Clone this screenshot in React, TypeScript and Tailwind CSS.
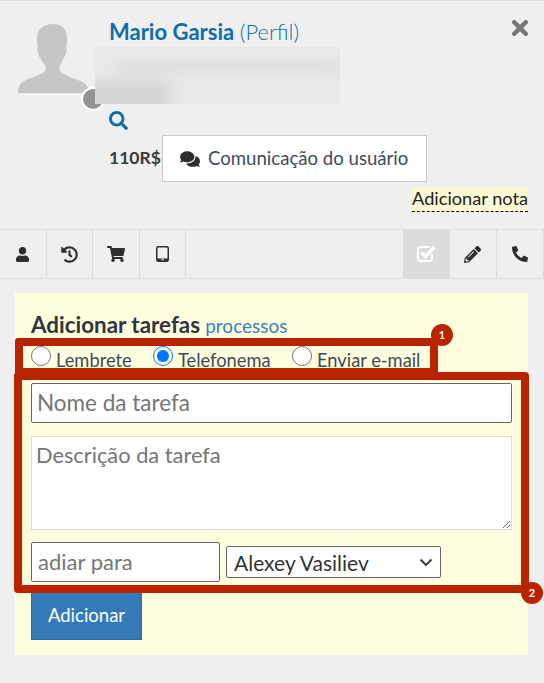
import { FaComments, FaHistory, FaPencilAlt, FaPhone, FaSearch, FaShoppingCart, FaTimes, FaUser } from "react-icons/fa";

const font = { fontFamily: "Lato, 'Open Sans', sans-serif" };

function Avatar() {
  return (
    <svg width="72" height="69" viewBox="0 0 72 69" className="block">
      <path
        fill="#c6c6c6"
        d="M35 0c9 0 14 5 14 14 0 4 0 8-1 10 1 1 1 3 0 5-1 3-1 4-2 4-1 3-2 6-4 8-1 2-1 4 0 6 4 4 10 6 18 9 8 3 10 6 12 13v0H0c0-7 2-10 8-13 7-3 15-5 19-9 1-2 1-4 0-6-2-2-4-5-5-8-1 0-2-2-2-4-1-2-1-4 0-5-1-3-1-7-1-10C19 5 26 0 35 0z"
      />
    </svg>
  );
}

function CheckSquare() {
  return (
    <svg width="20" height="18" viewBox="0 0 20 18" fill="none" stroke="#fff" className="block">
      <path strokeWidth="2" d="M13 2H3.5C2 2 1 3 1 4.5v9C1 15 2 16 3.5 16h9c1.500 0 2.500-1 2.500-2.500V9" />
      <path strokeWidth="3.400" d="M4.500 7.500l4 4 9-9.500" />
    </svg>
  );
}

function Tablet() {
  return (
    <svg width="13" height="16" viewBox="0 0 13 16" className="block">
      <rect x="0.750" y="0.750" width="11.500" height="14.500" rx="1.500" fill="none" stroke="#2e2e2e" strokeWidth="1.500" />
      <rect x="1" y="12.500" width="11" height="2.500" fill="#2e2e2e" />
      <rect x="5" y="13.250" width="3" height="1" fill="#efefef" />
    </svg>
  );
}

function LeftTab({ children }: { children: React.ReactNode }) {
  return <div className="w-[46.5px] h-full flex items-center justify-center border-r border-[#ddd] text-[#2e2e2e]">{children}</div>;
}

function Radio({ label, checked, className }: { label: string; checked?: boolean; className?: string }) {
  return (
    <label className={"flex items-start " + (className || "")}>
      <input type="radio" name="tipo" defaultChecked={checked} className="w-[20px] h-[20px] m-0 accent-[#0075ff]" />
      <span className="ml-[5px] mt-[4px] text-[18.300px] leading-[20px] text-[#3c4a57]">{label}</span>
    </label>
  );
}

export default function App() {
  return (
    <div style={font} className="relative w-[544px] h-[683px] overflow-hidden bg-[#efefef] border-t border-[#dfdfdf]">
      {/* cabecalho do perfil */}
      <div className="relative h-[228px] pl-[109px]">
        <div className="absolute left-[18px] top-[23px]">
          <Avatar />
        </div>
        <div className="absolute left-[81px] top-[86px] w-[24px] h-[24px] rounded-full bg-[#949494] border-2 border-white" />
        {/* dados borrados */}
        <div className="absolute left-[95px] top-[46px] w-[245px] h-[57px] overflow-hidden bg-[#e9e9e9]">
          <div className="absolute left-[20px] top-[12px] w-[225px] h-[14px] bg-[#dedede] blur-[6px]" />
          <div className="absolute left-[-10px] top-[34px] w-[85px] h-[30px] bg-[#d4d4d4] blur-[7px]" />
        </div>
        <button className="absolute right-[12px] top-[15px] text-[#777]">
          <FaTimes size={24} />
        </button>
        <div className="pt-[18px] text-[22px] leading-[26px] text-[#0f6cad]">
          <span className="font-bold">Mario Garsia</span> <span className="font-light">(Perfil)</span>
        </div>
        <div className="mt-[66px] text-[#0f6cad]">
          <FaSearch size={19} />
        </div>
        <div className="mt-[5px] flex items-center">
          <span className="w-[53px] text-[17.500px] font-bold text-[#3a3a3a]">110R$</span>
          <div className="w-[265px] h-[47px] flex items-center pl-[17px] gap-[8px] bg-white border border-[#c9c9c9] text-[18.600px] text-[#3f4a5a]">
            <FaComments size={20} className="text-[#2e2e2e]" />
            Comunicação do usuário
          </div>
        </div>
        <div className="absolute right-[16px] top-[186px] h-[25px] leading-[23px] text-[18.200px] text-[#222] bg-[#fbf9d4] border-b border-dashed border-black">
          Adicionar nota
        </div>
      </div>

      {/* abas */}
      <div className="h-[50px] flex justify-between border-y border-[#ddd]">
        <div className="flex h-full">
          <LeftTab><FaUser size={15} /></LeftTab>
          <LeftTab><FaHistory size={17} /></LeftTab>
          <LeftTab><FaShoppingCart size={18} /></LeftTab>
          <LeftTab><Tablet /></LeftTab>
        </div>
        <div className="flex h-full border-r border-[#ddd]">
          <div className="w-[47px] h-full flex items-center justify-center bg-[#dcdcdc]"><CheckSquare /></div>
          <div className="w-[46.500px] h-full flex items-center justify-center border-r border-[#ddd] text-[#2e2e2e]"><FaPencilAlt size={17} /></div>
          <div className="w-[46.500px] h-full flex items-center justify-center text-[#2e2e2e]"><FaPhone size={16} className="-scale-x-100" /></div>
        </div>
      </div>

      {/* formulario */}
      <div className="relative mt-[14px] ml-[15px] w-[513px] h-[362px] bg-[#ffffdf] pl-[16px]">
        <div className="pt-[19px] h-[46px] leading-[26px]">
          <span className="text-[22.400px] font-bold text-[#2f3640] mr-[1px]">Adicionar tarefas</span>{" "}
          <span className="text-[19px] text-[#3a7fbf]">processos</span>
        </div>
        <div className="flex h-[34px] pt-[7px] box-content">
          <Radio label="Lembrete" className="w-[122px]" />
          <Radio label="Telefonema" className="w-[139px]" checked />
          <Radio label="Enviar e-mail" />
        </div>
        <input placeholder="Nome da tarefa" className="block mt-[3px] w-[481px] h-[40px] px-[5px] pb-[1px] bg-white border border-[#666] rounded-[2px] text-[22.500px] text-[#333] placeholder:text-[#757575]" />
        <textarea placeholder="Descrição da tarefa" className="block mt-[13px] w-[481px] h-[94px] px-[4px] py-[3px] bg-white border border-[#ddd] text-[21.800px] leading-[30px] placeholder:text-[#757575]" />
        <div className="mt-[12px] flex items-center">
          <input placeholder="adiar para" className="w-[189px] h-[40px] px-[6px] pb-[1px] bg-white border border-[#666] rounded-[2px] text-[22px] placeholder:text-[#757575]" />
          <div className="relative ml-[6px] w-[215px] h-[32px]">
            <select className="w-full h-full appearance-none pl-[7px] pb-[2px] bg-white border border-[#666] rounded-[2px] text-[21px] text-[#333]" defaultValue="Alexey Vasiliev">
              <option>Alexey Vasiliev</option>
            </select>
            <svg width="14" height="9" viewBox="0 0 14 9" fill="none" stroke="#444" strokeWidth="2.200" className="absolute right-[8px] top-[12px] pointer-events-none">
              <path d="M1.500 1.500L7 7l5.500-5.500" />
            </svg>
          </div>
        </div>
        <button className="block mt-[10px] w-[111px] h-[48px] bg-[#337ab7] border border-[#2e6da4] text-white text-[18.500px]">Adicionar</button>

        {/* anotacoes */}
        <div className="absolute left-0 top-[45px] w-[423px] h-[38px] border-[8px] border-[#b92400] rounded-[3px]" />
        <div className="absolute left-[-1px] top-[79px] w-[515px] h-[221px] border-[8px] border-[#b92400] rounded-[4px]" />
        <div className="absolute left-[416px] top-[31px] w-[22px] h-[22px] rounded-full bg-[#b92400] text-white text-[11px] font-bold flex items-center justify-center">1</div>
        <div className="absolute left-[506px] top-[289px] w-[22px] h-[22px] rounded-full bg-[#b92400] text-white text-[11px] font-bold flex items-center justify-center">2</div>
      </div>
    </div>
  );
}
